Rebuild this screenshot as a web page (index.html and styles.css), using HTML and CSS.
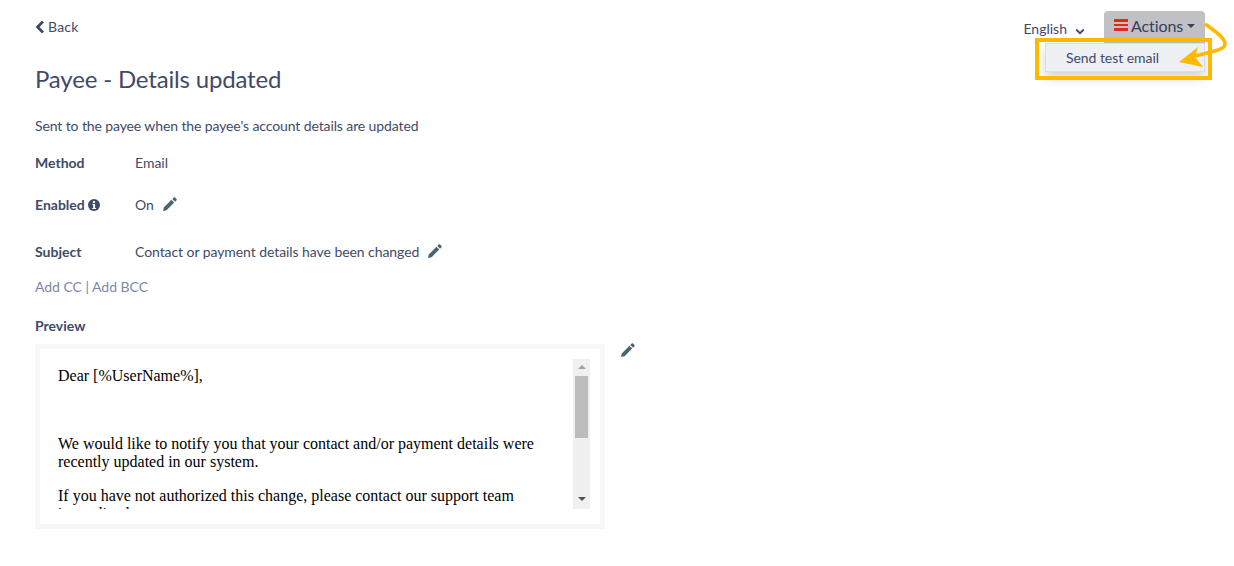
FILE: index.html
```html
<!DOCTYPE html>
<html lang="en">
<head>
    <meta charset="UTF-8">
    <title>Payee - Details updated</title>
    <link rel="stylesheet" href="styles.css">
</head>
<body>
    <div class="page">
        <!-- top bar -->
        <div class="topbar">
            <a class="back" href="#">
                <svg class="back-icon" viewBox="0 0 10 14"><path d="M8 1.5 2.6 7 8 12.5" fill="none" stroke="currentColor" stroke-width="2.8"/></svg>
                Back
            </a>
            <div class="top-actions">
                <div class="lang">English
                    <svg class="lang-caret" viewBox="0 0 10 7"><path d="M1.2 1.5 5 5.2 8.8 1.5" fill="none" stroke="currentColor" stroke-width="1.8"/></svg>
                </div>
                <div class="actions">
                    <span class="burger"><i></i><i></i><i></i></span>Actions<span class="caret"></span>
                    <div class="menu">Send test email</div>
                </div>
            </div>
        </div>

        <h1 class="title">Payee - Details updated</h1>
        <p class="desc">Sent to the payee when the payee's account details are updated</p>

        <div class="row row-method">
            <div class="label">Method</div>
            <div>Email</div>
        </div>
        <div class="row row-enabled">
            <div class="label">Enabled
                <svg class="info" viewBox="0 0 12 12"><circle cx="6" cy="6" r="6" fill="currentColor"/><rect x="5" y="2" width="2" height="2" fill="#fff"/><path d="M4.4 5h2.7v3.9h.9V10H4.2V8.900h1V6.100h-.8z" fill="#fff"/></svg>
            </div>
            <div>On</div>
            <svg class="pencil pencil-on" viewBox="0 0 14 14"><path d="M0 14l.8-3.600L8.400 2.800l2.800 2.800-7.600 7.600zM9.300 1.900 10.700.5c.4-.4 1-.4 1.400 0l1.400 1.400c.4.4.4 1 0 1.400l-1.400 1.400z"/></svg>
        </div>
        <div class="row row-subject">
            <div class="label">Subject</div>
            <div class="subject-text">Contact or payment details have been changed</div>
            <svg class="pencil pencil-subject" viewBox="0 0 14 14"><path d="M0 14l.8-3.600L8.400 2.800l2.800 2.800-7.600 7.600zM9.300 1.900 10.700.5c.4-.4 1-.4 1.400 0l1.400 1.400c.4.4.4 1 0 1.400l-1.400 1.400z"/></svg>
        </div>
        <div class="cc-links"><a href="#">Add CC</a> | <a href="#">Add BCC</a></div>
        <div class="label preview-label">Preview</div>

        <div class="preview-row">
            <div class="preview">
                <div class="preview-body">
                    <div class="mail">
                        <p>Dear [%UserName%],</p>
                        <p class="gap">We would like to notify you that your contact and/or payment details were recently updated in our system.</p>
                        <p>If you have not authorized this change, please contact our support team immediately.</p>
                    </div>
                    <div class="scrollbar">
                        <span class="arrow-up"></span>
                        <span class="thumb"></span>
                        <span class="arrow-down"></span>
                    </div>
                </div>
            </div>
            <svg class="pencil pencil-preview" viewBox="0 0 14 14"><path d="M0 14l.8-3.600L8.400 2.800l2.800 2.800-7.600 7.600zM9.300 1.900 10.700.5c.4-.4 1-.4 1.400 0l1.400 1.400c.4.4.4 1 0 1.400l-1.400 1.400z"/></svg>
        </div>
    </div>

    <!-- tutorial highlight over the menu -->
    <div class="highlight"></div>
    <svg class="callout" viewBox="0 0 60 60" width="60" height="60">
        <path d="M30 4C38 10 50 17 50 24C50 30 38 31 20 36" fill="none" stroke="#ffb900" stroke-width="3.500"/>
        <path d="M4 42 23 27 20 37 28 47z" fill="#ffb900"/>
    </svg>
</body>
</html>
```

FILE: styles.css
```css
body {
    margin: 0;
    font-family: Lato, sans-serif;
    font-size: 14px;
    color: #3f4a68;
    background: #fff;
}

a {
    color: inherit;
    text-decoration: none;
}

.page {
    padding: 11px 29px 0 35px;
}

.topbar {
    display: flex;
    justify-content: space-between;
    align-items: flex-start;
}

.back {
    display: flex;
    align-items: center;
    gap: 3px;
    margin-top: 7px;
    line-height: 18px;
    letter-spacing: 0.2px;
}

.back-icon {
    width: 10px;
    height: 14px;
}

.top-actions {
    display: flex;
    align-items: flex-start;
}

.lang {
    display: flex;
    align-items: center;
    gap: 8px;
    margin: 9px 19px 0 0;
    line-height: 18px;
}

.lang-caret {
    width: 10px;
    height: 7px;
    margin-top: 4px;
}

.actions {
    position: relative;
    display: flex;
    align-items: center;
    width: 101px;
    height: 32px;
    padding: 0 0 4px 10px;
    box-sizing: border-box;
    background: #c1c0c5;
    border-radius: 4px 4px 0 0;
    font-size: 16px;
    letter-spacing: -0.1px;
    color: #33405c;
}

.burger {
    display: flex;
    flex-direction: column;
    gap: 2px;
    width: 14px;
    margin-right: 3px;
}

.burger i {
    height: 2.5px;
    background: #e0281e;
}

.caret {
    margin: 2px 0 0 4px;
    border-top: 4px solid #33405c;
    border-left: 4px solid transparent;
    border-right: 4px solid transparent;
}

.menu {
    position: absolute;
    top: 32px;
    left: -59px;
    width: 160px;
    height: 29px;
    box-sizing: border-box;
    padding-left: 20px;
    line-height: 28px;
    font-size: 14px;
    letter-spacing: -0.05px;
    color: #3f4a68;
    background: #eff0f4;
    border: 1px solid #dcdde6;
    box-shadow: 0 6px 12px rgba(0, 0, 0, 0.175);
}

.title {
    margin: 21px 0 0;
    font-size: 24px;
    font-weight: 400;
    line-height: 29px;
    letter-spacing: -0.17px;
}

.desc {
    margin: 24px 0 0;
    line-height: 18px;
    letter-spacing: -0.11px;
}

.row {
    display: flex;
    align-items: center;
    line-height: 18px;
}

.row-method {
    margin-top: 19px;
}

.row-enabled {
    margin-top: 24px;
}

.row-subject {
    margin-top: 29px;
}

.subject-text {
    letter-spacing: -0.07px;
}

.label {
    width: 100px;
    flex-shrink: 0;
    font-weight: 700;
}

.info {
    width: 12px;
    height: 12px;
    vertical-align: -1px;
}

.pencil {
    width: 14px;
    height: 14px;
    fill: #4a6673;
}

.pencil-on {
    margin: -3px 0 0 9px;
}

.pencil-subject {
    margin: -3px 0 0 9px;
}

.cc-links {
    margin-top: 17px;
    line-height: 18px;
    letter-spacing: -0.03px;
    color: #7d88a6;
}

.preview-label {
    margin-top: 21px;
    line-height: 18px;
}

.preview-row {
    display: flex;
    align-items: flex-start;
    margin-top: 9px;
}

.preview {
    width: 570px;
    height: 185px;
    box-sizing: border-box;
    border: 5px solid #f7f7f7;
}

.preview-body {
    display: flex;
    align-items: flex-start;
    justify-content: space-between;
    padding: 10px 10px 0 18px;
}

.mail {
    width: 497px;
    height: 150px;
    overflow: hidden;
    font-family: "Liberation Serif", serif;
    font-size: 16px;
    line-height: 18px;
    color: #000;
}

.mail p {
    margin: 8px 0 16px;
}

.mail p.gap {
    margin-top: 50px;
}

.scrollbar {
    display: flex;
    flex-direction: column;
    align-items: center;
    width: 17px;
    height: 150px;
    background: #f0f0f0;
}

.arrow-up {
    margin-top: 6px;
    border-bottom: 4px solid #a3a3a3;
    border-left: 4px solid transparent;
    border-right: 4px solid transparent;
}

.thumb {
    width: 13px;
    height: 62px;
    margin-top: 7px;
    background: #bcbcbc;
}

.arrow-down {
    margin-top: 59px;
    border-top: 4px solid #505050;
    border-left: 4px solid transparent;
    border-right: 4px solid transparent;
}

.pencil-preview {
    margin: -1px 0 0 16px;
}

.highlight {
    position: absolute;
    left: 1035px;
    top: 38px;
    width: 169px;
    height: 34px;
    border: 4px solid #ffb900;
}

.callout {
    position: absolute;
    left: 1175px;
    top: 20px;
}
```
